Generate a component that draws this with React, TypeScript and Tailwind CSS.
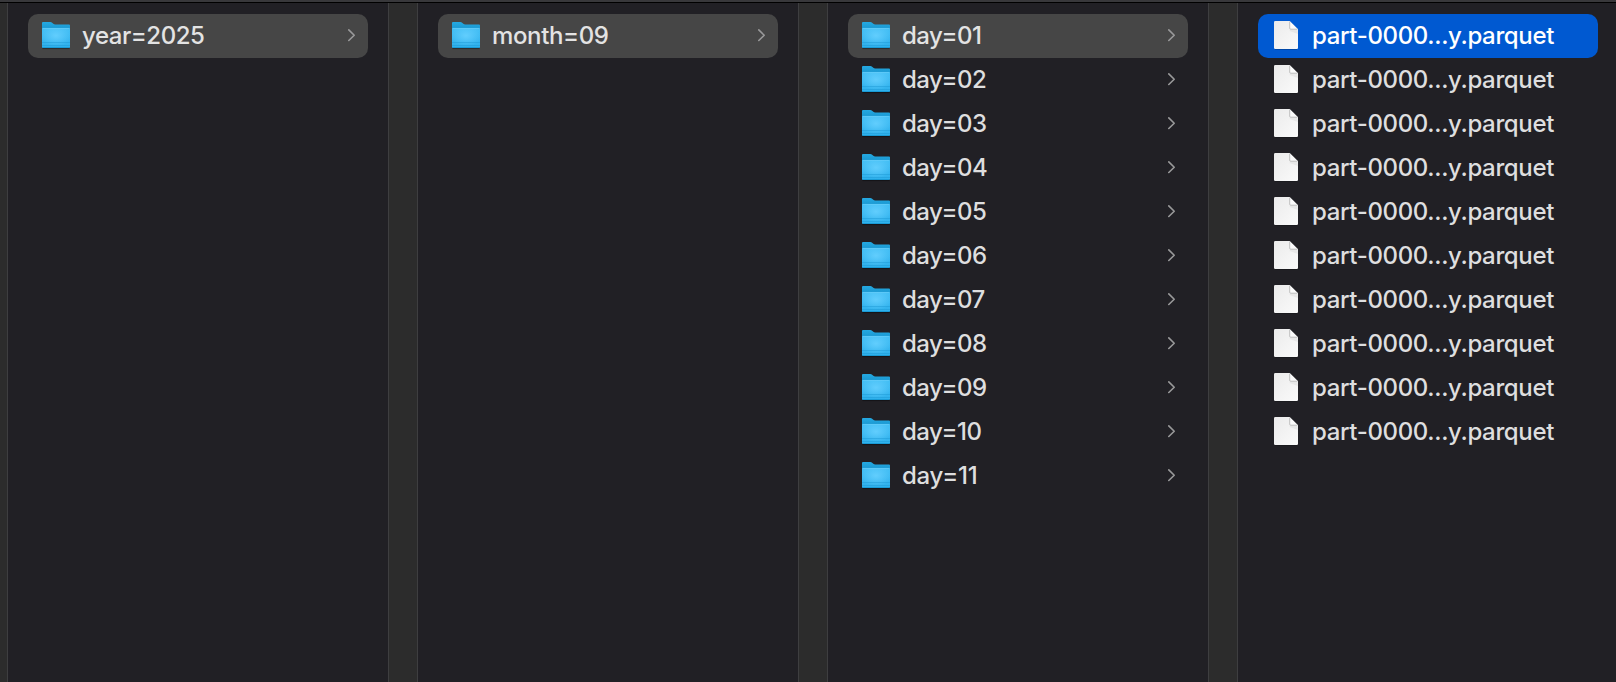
import React from "react";

type Kind = "folder" | "file";
type Item = { name: string; tracking: string };
type ColumnData = { kind: Kind; items: Item[] };

const columns: ColumnData[] = [
  { kind: "folder", items: [{ name: "year=2025", tracking: "tracking-[-0.46px]" }] },
  { kind: "folder", items: [{ name: "month=09", tracking: "tracking-[-0.37px]" }] },
  {
    kind: "folder",
    items: Array.from({ length: 11 }, (_, i) => ({
      name: `day=${String(i + 1).padStart(2, "0")}`,
      tracking: i === 10 ? "tracking-[-0.25px]" : "tracking-[-0.5px]",
    })),
  },
  {
    kind: "file",
    items: Array.from({ length: 10 }, () => ({
      name: "part-0000...y.parquet",
      tracking: "tracking-[-0.36px]",
    })),
  },
];

function FolderIcon() {
  return (
    <svg className="ml-[13px] h-8 w-8 shrink-0" viewBox="0 0 32 32" aria-hidden="true">
      <path d="M1.4 28.5H28.6" stroke="#000" strokeOpacity=".35" strokeWidth="1.2" />
      <path d="M1 3Q1 2 2 2H9.3Q10.3 2 11.1 2.7L12.3 3.8Q13.1 4.6 14.2 4.6H28Q29 4.6 29 5.6V12H1Z" fill="url(#folderBack)" />
      <path d="M1 8.9Q1 8 2 8H28Q29 8 29 8.9V26.7Q29 28 27.7 28H2.3Q1 28 1 26.7Z" fill="url(#folderBase)" />
      <path d="M1 8.9Q1 8 2 8H28Q29 8 29 8.9V26.7Q29 28 27.7 28H2.3Q1 28 1 26.7Z" fill="url(#folderGlow)" />
      <path d="M1.5 8.4H28.5" stroke="#70d2fb" strokeWidth=".7" strokeOpacity=".8" />
      <path d="M1 22.5H29M1 25.5H29" stroke="#1d9ad6" strokeWidth="1" strokeOpacity=".5" />
      <path d="M1.5 27.5H28.5" stroke="#1495cf" strokeWidth="1" strokeOpacity=".8" />
    </svg>
  );
}

function FileIcon() {
  return (
    <svg className="ml-[13px] h-8 w-8 shrink-0" viewBox="0 0 32 32" aria-hidden="true">
      <path d="M4 29.3H26" stroke="#000" strokeOpacity=".3" strokeWidth=".8" />
      <path d="M3 2.2Q3 1 4.2 1H18.7L27 9.2V27.8Q27 29 25.8 29H4.2Q3 29 3 27.8Z" fill="url(#paper)" />
      <path d="M18.7 9.2H26.5L27 14L18.7 11Z" fill="#d9d9d9" fillOpacity=".45" />
      <path d="M18.7 1.2V8.2Q18.7 9.2 19.7 9.2H26.8Z" fill="#fbfbfb" />
      <path d="M18.7 1.6V8.2Q18.7 9.2 19.7 9.2H26.4" fill="none" stroke="#a8a8a8" strokeWidth=".7" />
    </svg>
  );
}

function Chevron() {
  return (
    <svg className="mr-3 h-4 w-2 shrink-0" viewBox="0 0 8 16" fill="none" aria-hidden="true">
      <path d="M.8 1.9L6.2 7.2L.8 12.5" stroke="#99999a" strokeWidth="1.6" strokeLinecap="round" strokeLinejoin="round" />
    </svg>
  );
}

function Row({ item, kind, selected }: { item: Item; kind: Kind; selected: boolean }) {
  const tone = !selected
    ? "text-[#dededf]"
    : kind === "file"
      ? "bg-[#0059d1] text-white"
      : "bg-[#464646] text-[#e3e3e3]";
  return (
    <li className={`flex h-11 items-center rounded-[10px] ${tone}`}>
      {kind === "folder" ? <FolderIcon /> : <FileIcon />}
      <span className={`ml-[9px] flex-1 whitespace-nowrap text-[24px] font-medium leading-[44px] ${item.tracking}`}>
        {item.name}
      </span>
      {kind === "folder" && <Chevron />}
    </li>
  );
}

export default function App() {
  return (
    <div className="flex h-[682px] w-[1616px] flex-col overflow-hidden bg-[#212025] font-['Inter',sans-serif]">
      <svg className="absolute h-0 w-0" aria-hidden="true">
        <defs>
          <linearGradient id="folderBack" x1="0" y1="0" x2="0" y2="1">
            <stop offset="0" stopColor="#25a9e2" />
            <stop offset="1" stopColor="#148fc8" />
          </linearGradient>
          <linearGradient id="folderBase" x1="0" y1="0" x2="0" y2="1">
            <stop offset="0" stopColor="#45bff5" />
            <stop offset="1" stopColor="#2eb0ec" />
          </linearGradient>
          <radialGradient id="folderGlow" cx=".5" cy=".38" r=".55">
            <stop offset="0" stopColor="#66d0ff" stopOpacity=".9" />
            <stop offset="1" stopColor="#66d0ff" stopOpacity="0" />
          </radialGradient>
          <linearGradient id="paper" x1="0" y1="0" x2="1" y2="1">
            <stop offset="0" stopColor="#ebebeb" />
            <stop offset="1" stopColor="#fafafa" />
          </linearGradient>
        </defs>
      </svg>
      <div className="h-[3px] shrink-0 border-b border-black bg-[#38383b]" />
      <main className="flex flex-1">
        <div className="w-[7px] shrink-0 bg-[#2c2c2c]" />
        {columns.map((column, c) => (
          <React.Fragment key={c}>
            {c > 0 && <div className="w-7 shrink-0 bg-[#2c2c2c]" />}
            <ul className="w-[382px] shrink-0 border-x border-[#3e3e40] px-5 pt-[11px]">
              {column.items.map((item, i) => (
                <Row key={i} item={item} kind={column.kind} selected={i === 0} />
              ))}
            </ul>
          </React.Fragment>
        ))}
      </main>
    </div>
  );
}
